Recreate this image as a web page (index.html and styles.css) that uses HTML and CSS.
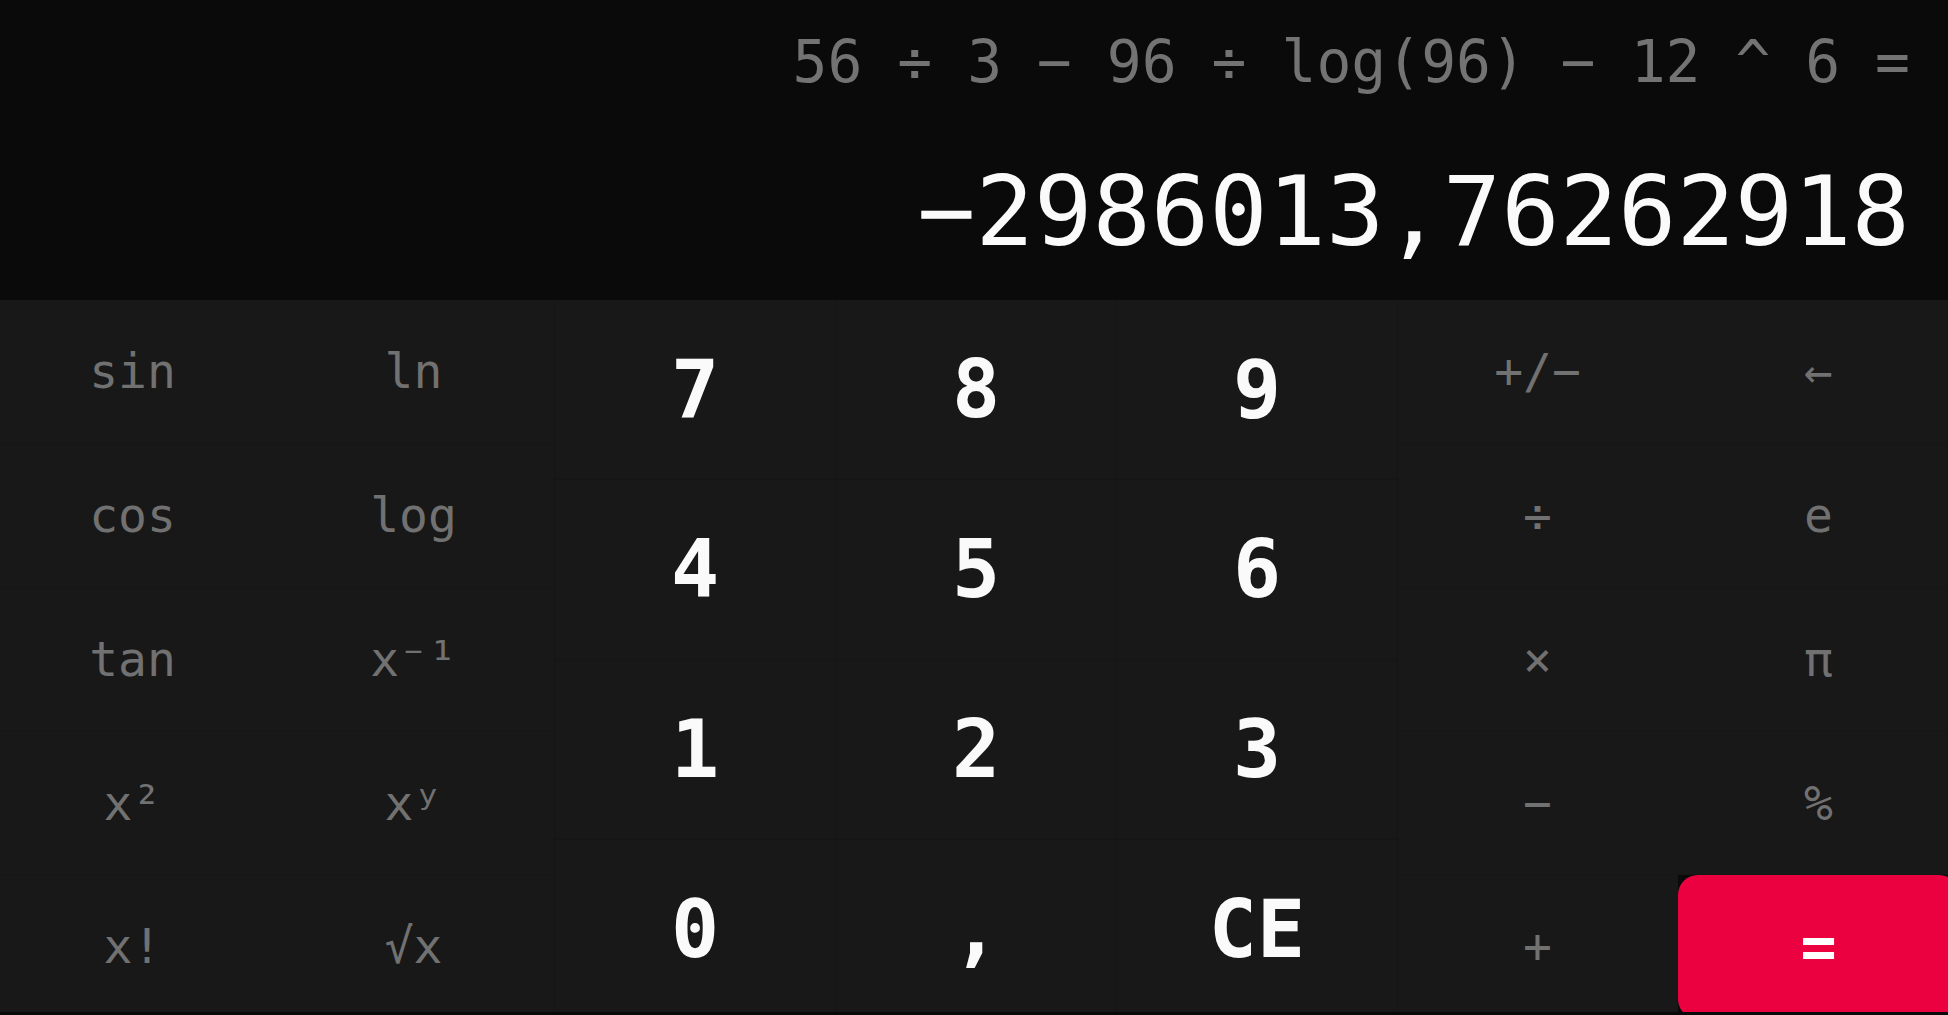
FILE: index.html
```html
<!DOCTYPE html>
<html lang="ru">
<head>
<meta charset="utf-8">
<title>Calculator</title>
<link rel="stylesheet" href="styles.css">
</head>
<body>
<div class="calc">
  <div class="display">
    <div class="expr">56 ÷ 3 − 96 ÷ log(96) − 12 ^ 6 =</div>
    <div class="result">−2986013,76262918</div>
  </div>
  <div class="pad">
    <div class="side">
      <div class="key fn">sin</div>
      <div class="key fn">ln</div>
      <div class="key fn">cos</div>
      <div class="key fn">log</div>
      <div class="key fn">tan</div>
      <div class="key fn">x⁻¹</div>
      <div class="key fn">x²</div>
      <div class="key fn">xʸ</div>
      <div class="key fn">x!</div>
      <div class="key fn">√x</div>
    </div>
    <div class="nums">
      <div class="key num">7</div>
      <div class="key num">8</div>
      <div class="key num">9</div>
      <div class="key num">4</div>
      <div class="key num">5</div>
      <div class="key num">6</div>
      <div class="key num">1</div>
      <div class="key num">2</div>
      <div class="key num">3</div>
      <div class="key num">0</div>
      <div class="key num">,</div>
      <div class="key num">CE</div>
    </div>
    <div class="side">
      <div class="key fn">+/−</div>
      <div class="key fn">←</div>
      <div class="key fn">÷</div>
      <div class="key fn">e</div>
      <div class="key fn">×</div>
      <div class="key fn">π</div>
      <div class="key fn">−</div>
      <div class="key fn">%</div>
      <div class="key fn">+</div>
      <div class="key eq"><span class="eq-btn">=</span></div>
    </div>
  </div>
</div>
</body>
</html>
```
FILE: styles.css
```css
html, body {
  margin: 0;
  padding: 0;
  background: #0a0a0a;
  overflow: hidden;
}
body {
  font-family: "DejaVu Sans Mono", "Liberation Mono", monospace;
  width: 1948px;
  height: 1015px;
}
.calc {
  display: flex;
  flex-direction: column;
}
.display {
  height: 300px;
  box-sizing: border-box;
  padding: 33px 38px 0 0;
  display: flex;
  flex-direction: column;
  align-items: flex-end;
  background: #0a0a0a;
}
.expr {
  font-size: 58px;
  line-height: 58px;
  color: #737373;
  white-space: nowrap;
}
.result {
  margin-top: 72px;
  font-size: 97px;
  line-height: 97px;
  color: #fafafa;
  white-space: nowrap;
}
.pad {
  display: flex;
  width: 1967px;
  margin-left: -8px;
  height: 712px;
  overflow: hidden;
  background: #181818;
}
.side {
  flex: none;
  width: 562px;
  display: grid;
  grid-template-columns: 281px 281px;
  grid-template-rows: repeat(5, 143.75px);
}
.nums {
  flex: none;
  width: 843px;
  display: grid;
  grid-template-columns: repeat(3, 281px);
  grid-template-rows: repeat(4, 180px);
  border-left: 1px solid #151515;
  box-sizing: border-box;
}
.key {
  display: flex;
  align-items: center;
  justify-content: center;
  box-sizing: border-box;
  white-space: nowrap;
}
.side .key {
  border-bottom: 1px solid #161616;
}
.nums .key {
  border-right: 1px solid #151515;
  border-bottom: 1px solid #151515;
}
.fn {
  font-size: 48px;
  color: #717171;
}
.num {
  font-size: 80px;
  font-weight: bold;
  color: #fafafa;
}
.eq {
  background: #0a0a0a;
  border-bottom: none !important;
}
.eq-btn {
  width: 100%;
  height: 100%;
  background: #eb0040;
  border-radius: 20px;
  color: #ffffff;
  font-size: 60px;
  font-weight: bold;
  display: flex;
  align-items: center;
  justify-content: center;
}
```
